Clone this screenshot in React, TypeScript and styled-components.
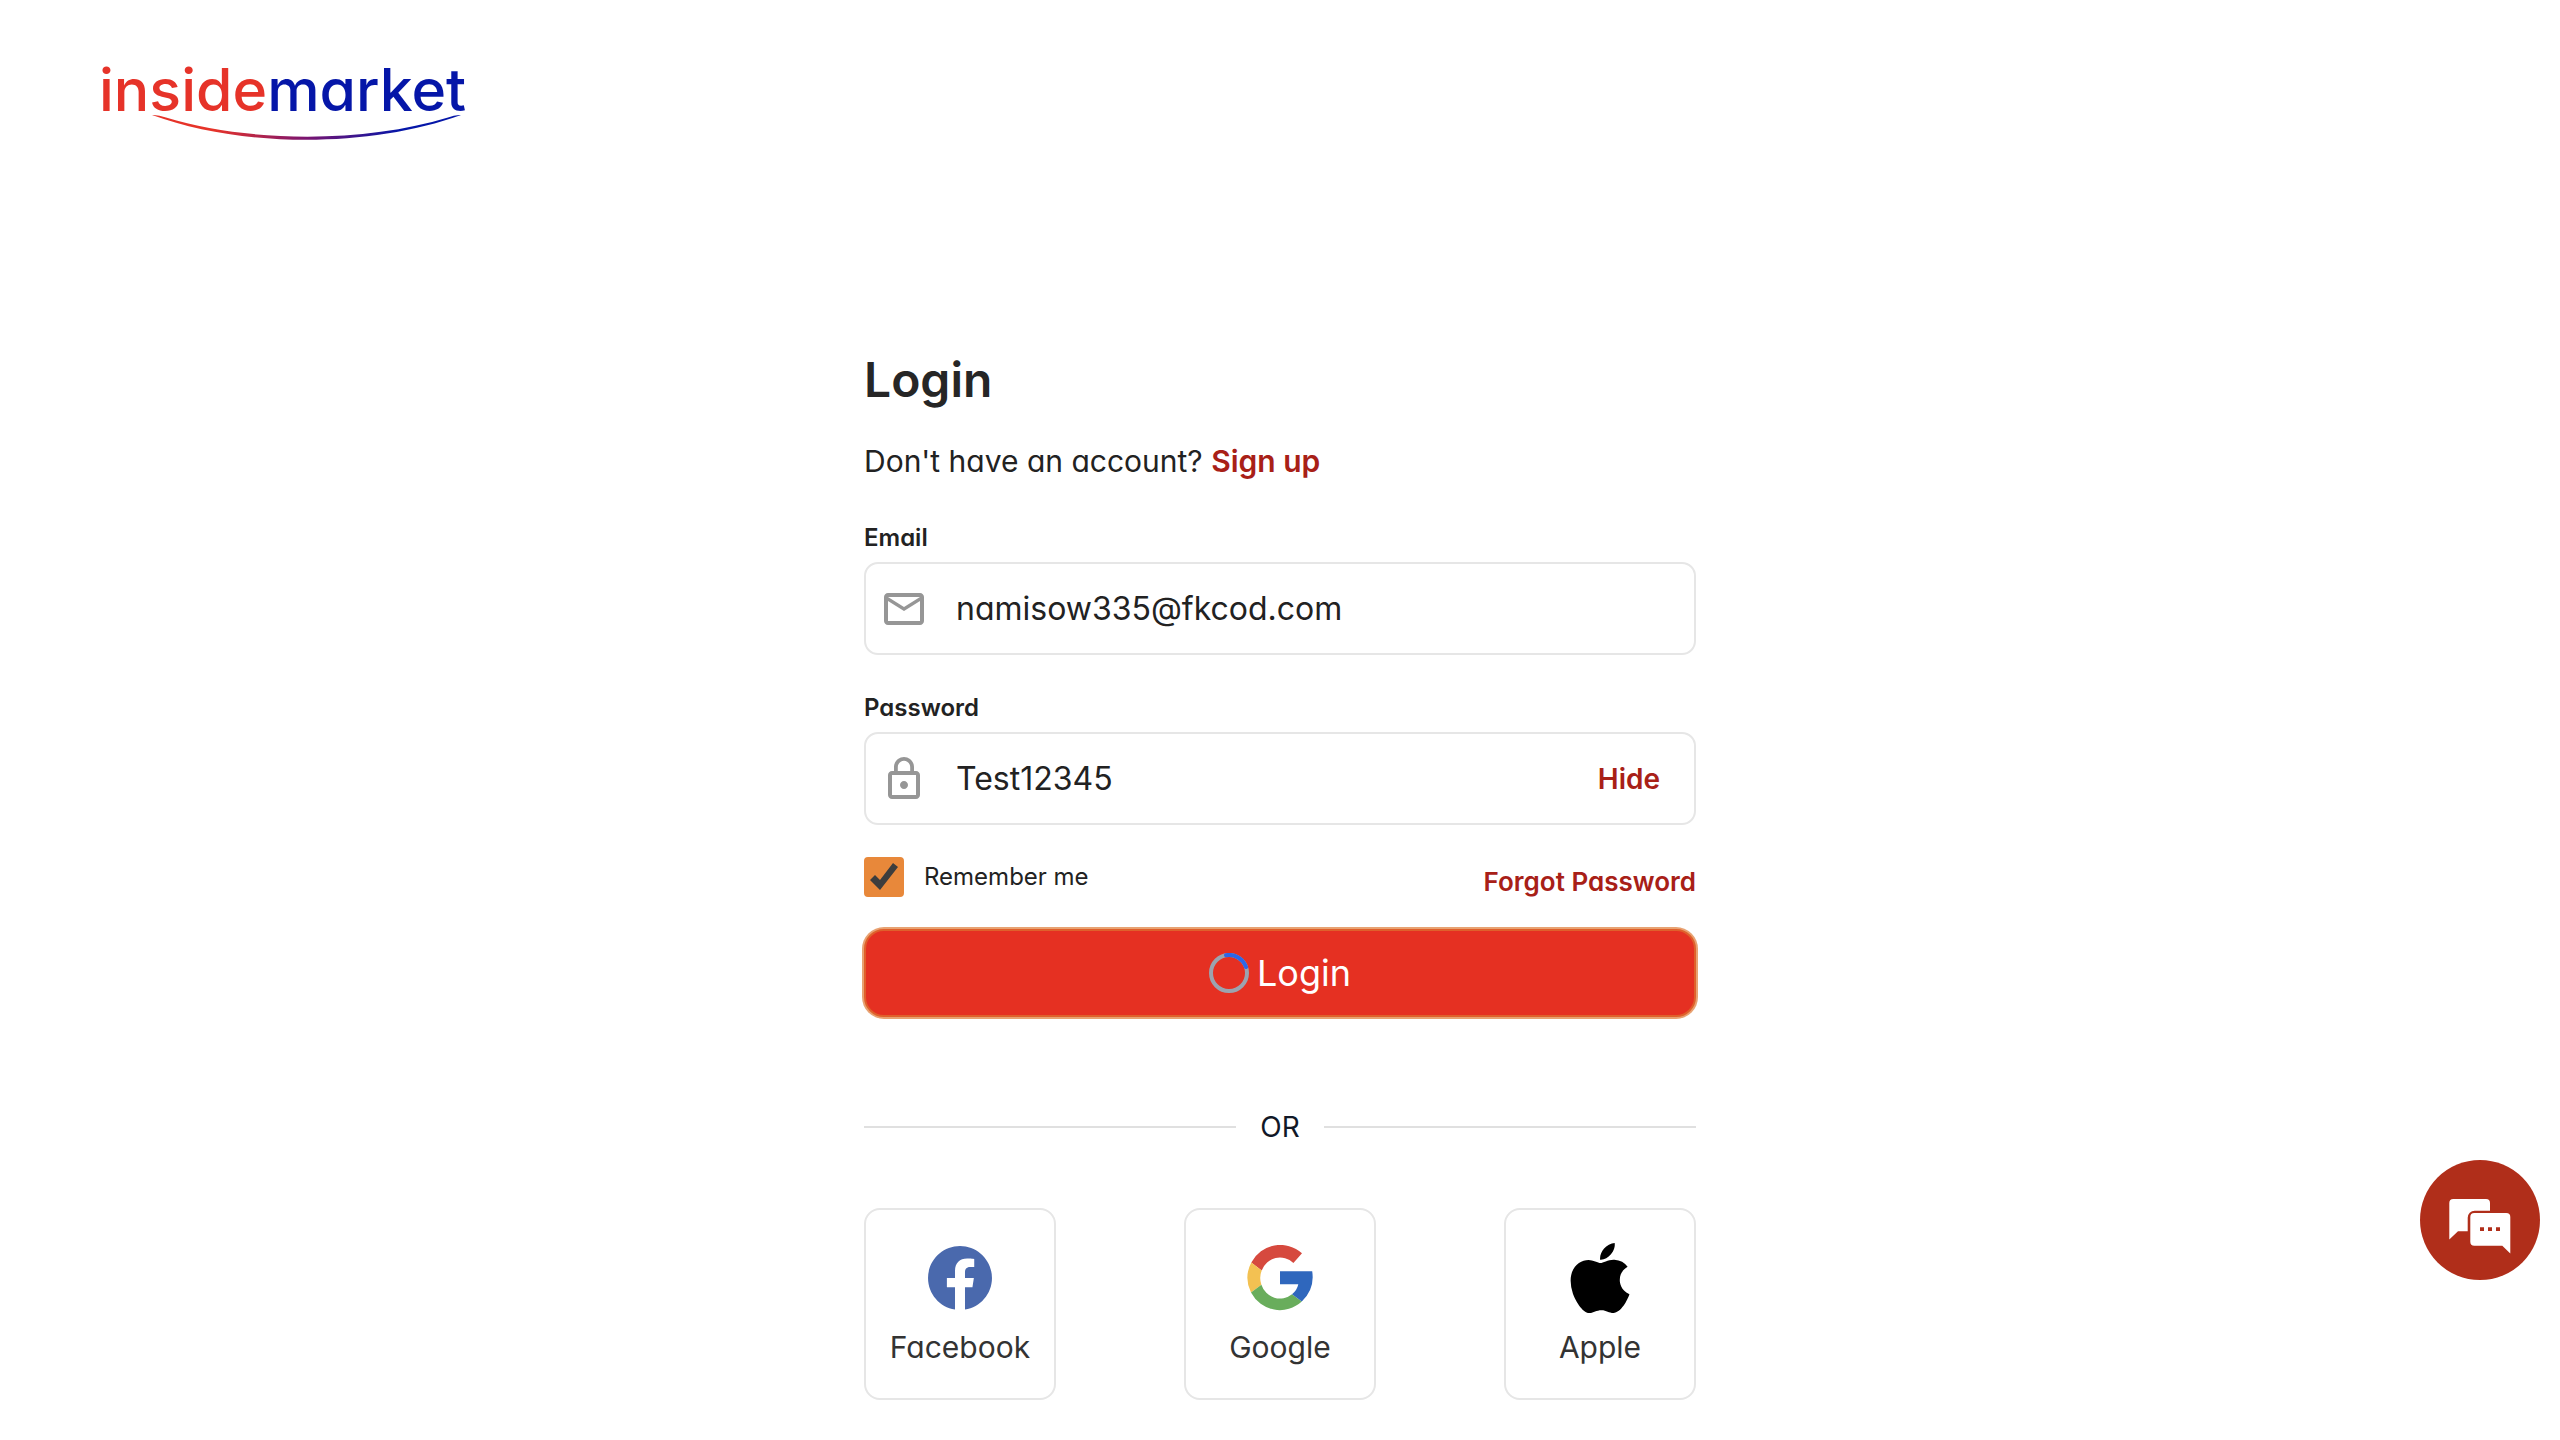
import React, { useState } from "react";
import styled, { createGlobalStyle } from "styled-components";
import { MdOutlineMail, MdLockOutline } from "react-icons/md";
import { FaFacebook, FaApple } from "react-icons/fa";

const GlobalStyle = createGlobalStyle`
  *, *::before, *::after { box-sizing: border-box; }
  body {
    margin: 0;
    background: #fff;
    color: #222;
    font-family: Inter, "Open Sans", sans-serif;
    font-feature-settings: "cv11";
  }
  button, input { font: inherit; font-feature-settings: inherit; color: inherit; }
`;

const Header = styled.header`
  padding: 48px 100px 0;
  height: 144px;
`;

const LogoLink = styled.a`
  display: inline-block;
`;

const LogoSvg = styled.svg`
  display: block;
  overflow: visible;
`;

const Wordmark = styled.text`
  font-size: 59px;
  font-weight: 500;
`;

const Tone = styled.tspan<{ $color: string }>`
  fill: ${(p) => p.$color};
`;

const Main = styled.main`
  width: 100%;
  max-width: 832px;
  margin: 200px auto 0;
  padding-bottom: 40px;
`;

const Title = styled.h1`
  margin: 0 0 24px;
  font-size: 48px;
  line-height: 72px;
  font-weight: 600;
  color: #262626;
`;

const Intro = styled.p`
  margin: 0 0 38px;
  font-size: 30px;
  line-height: 42px;
`;

const TextLink = styled.a`
  color: #a82017;
  font-weight: 600;
  text-decoration: none;
`;

const Field = styled.div<{ $gap: number }>`
  display: flex;
  flex-direction: column;
  gap: 6px;
  margin-bottom: ${(p) => p.$gap}px;
`;

const FieldLabel = styled.label`
  font-size: 24px;
  line-height: 36px;
  font-weight: 600;
`;

const InputBox = styled.div`
  display: flex;
  align-items: center;
  height: 93px;
  padding: 0 34px 0 14px;
  border: 2px solid #e6e6e6;
  border-radius: 14px;
  svg { flex: none; color: #969696; }
`;

const TextInput = styled.input`
  flex: 1;
  min-width: 0;
  padding: 0;
  margin-left: 28px;
  border: 0;
  outline: 0;
  background: none;
  font-size: 32px;
  line-height: 48px;
`;

const HideButton = styled.button`
  padding: 0;
  border: 0;
  background: none;
  color: #a82017;
  font-size: 28px;
  line-height: 42px;
  font-weight: 600;
  cursor: pointer;
`;

const Options = styled.div`
  display: flex;
  justify-content: space-between;
  align-items: flex-start;
  margin-bottom: 27px;
`;

const Remember = styled.label`
  display: flex;
  align-items: center;
  gap: 20px;
  font-size: 24px;
  line-height: 40px;
`;

const Checkbox = styled.input`
  appearance: none;
  width: 40px;
  height: 40px;
  margin: 0;
  border: 2px solid #e8883a;
  border-radius: 4px;
  &:checked { background: #e8883a; }
  &:checked::before {
    content: "";
    display: block;
    width: 36px;
    height: 36px;
    background: #3d3d3d;
    clip-path: polygon(4px 21px, 9px 16px, 14px 21px, 27px 4px, 32px 8px, 14px 31px);
  }
`;

const Forgot = styled(TextLink)`
  padding-top: 5px;
  font-size: 26px;
  line-height: 40px;
`;

const Submit = styled.button`
  display: flex;
  align-items: center;
  justify-content: center;
  gap: 8px;
  width: 100%;
  height: 88px;
  border: 2px solid #df602b;
  border-radius: 20px;
  box-shadow: 0 0 0 2px #e8a272;
  background: #e53022;
  color: #fff;
  font-size: 36px;
  cursor: pointer;
`;

const Divider = styled.div`
  display: flex;
  align-items: center;
  justify-content: center;
  margin: 89px 0 60px;
  color: #111827;
  font-size: 28px;
  line-height: 42px;
`;

const Rule = styled.span`
  flex: 1;
  height: 2px;
  background: #e0e0e0;
`;

const OrText = styled.span`
  width: 88px;
  text-align: center;
`;

const Providers = styled.div`
  display: flex;
  justify-content: space-between;
`;

const Provider = styled.button`
  display: flex;
  flex-direction: column;
  align-items: center;
  gap: 12px;
  width: 192px;
  height: 192px;
  padding: 32px 0 0;
  border: 2px solid #e6e6e6;
  border-radius: 16px;
  background: #fff;
  color: #333;
  font-size: 30px;
  line-height: 42px;
  cursor: pointer;
`;

const ProviderIcon = styled.span`
  display: flex;
  align-items: center;
  justify-content: center;
  height: 72px;
`;

const ChatButton = styled.button`
  position: fixed;
  right: 20px;
  bottom: 160px;
  width: 120px;
  height: 120px;
  padding: 0;
  border: 0;
  border-radius: 50%;
  background: #b02e1a;
  cursor: pointer;
  svg { display: block; }
`;

const Logo = () => (
  <LogoSvg width="364" height="96" viewBox="100 48 364 96" role="img" aria-label="insidemarket">
    <defs>
      <linearGradient id="swoosh" x1="0" x2="1" y1="0" y2="0">
        <stop offset="0.2" stopColor="#e63329" />
        <stop offset="0.5" stopColor="#7a1470" />
        <stop offset="0.8" stopColor="#0516a8" />
      </linearGradient>
    </defs>
    <Wordmark x="99" y="111">
      <Tone $color="#e63329">inside</Tone>
      <Tone $color="#0516a8">market</Tone>
    </Wordmark>
    <path
      d="M152 115Q158 114.500 166 117.500C250 143 365 143 448 117.500Q455 114.500 461 115C370 148 242 148 152 115Z"
      fill="url(#swoosh)"
    />
  </LogoSvg>
);

const Spinner = () => (
  <svg width="40" height="40" viewBox="0 0 40 40" fill="none" aria-hidden="true">
    <circle cx="20" cy="20" r="18" stroke="#9ca3af" strokeWidth="4" />
    <path d="M17 2.2A18 18 0 0 1 37 14" stroke="#2d66e8" strokeWidth="4" strokeLinecap="round" />
  </svg>
);

const GoogleIcon = () => (
  <svg width="66" height="66" viewBox="0 0 66 66" aria-hidden="true">
    <path fill="#d6493e" d="M4.3 17.5A32.7 33 0 0 1 55 8.3L46.4 18A19.5 20 0 0 0 14.7 25.5Z" />
    <path fill="#f3c152" d="M4.3 17.5A32.7 33 0 0 0 4 47.6L14.4 39.8A19.5 20 0 0 1 14.7 25.5Z" />
    <path fill="#69ad5c" d="M4 47.6A32.7 33 0 0 0 54.8 56.6L45 49.2A19.5 20 0 0 1 14.4 39.8Z" />
    <path fill="#2f67bd" d="M33 26.3H65.2Q68 44 54.8 56.6L45 49.2Q50 45.500 51.300 39.300H33Z" />
  </svg>
);

const ChatIcon = () => (
  <svg width="120" height="120" viewBox="0 0 120 120" fill="#fff" aria-hidden="true">
    <path d="M33.300 39H66a4 4 0 0 1 4 4v7.700H54.700a7 7 0 0 0-7 7v13.600H38l-8.700 8.200V43a4 4 0 0 1 4-4Z" />
    <path
      fillRule="evenodd"
      d="M54.300 53h32a4 4 0 0 1 4 4v36.500l-8-7.800h-28a4 4 0 0 1-4-4V57a4 4 0 0 1 4-4ZM60 67.300v3.700h4v-3.700ZM68 67.300v3.700h4v-3.700ZM76 67.300v3.700h4v-3.700Z"
    />
  </svg>
);

export default function App() {
  const [email, setEmail] = useState("namisow335@fkcod.com");
  const [password, setPassword] = useState("Test12345");
  const [visible, setVisible] = useState(true);

  return (
    <>
      <GlobalStyle />
      <Header>
        <LogoLink href="#">
          <Logo />
        </LogoLink>
      </Header>
      <Main>
        <form onSubmit={(e) => e.preventDefault()}>
          <Title>Login</Title>
          <Intro>
            Don't have an account? <TextLink href="#signup">Sign up</TextLink>
          </Intro>
          <Field $gap={35}>
            <FieldLabel htmlFor="email">Email</FieldLabel>
            <InputBox>
              <MdOutlineMail size={48} />
              <TextInput id="email" type="text" value={email} onChange={(e) => setEmail(e.target.value)} />
            </InputBox>
          </Field>
          <Field $gap={32}>
            <FieldLabel htmlFor="password">Password</FieldLabel>
            <InputBox>
              <MdLockOutline size={48} />
              <TextInput
                id="password"
                type={visible ? "text" : "password"}
                value={password}
                onChange={(e) => setPassword(e.target.value)}
              />
              <HideButton type="button" onClick={() => setVisible(!visible)}>
                {visible ? "Hide" : "Show"}
              </HideButton>
            </InputBox>
          </Field>
          <Options>
            <Remember>
              <Checkbox type="checkbox" defaultChecked />
              Remember me
            </Remember>
            <Forgot href="#forgot">Forgot Password</Forgot>
          </Options>
          <Submit type="submit">
            <Spinner />
            Login
          </Submit>
        </form>
        <Divider>
          <Rule />
          <OrText>OR</OrText>
          <Rule />
        </Divider>
        <Providers>
          <Provider type="button">
            <ProviderIcon>
              <FaFacebook size={66} color="#4a69ad" />
            </ProviderIcon>
            Facebook
          </Provider>
          <Provider type="button">
            <ProviderIcon>
              <GoogleIcon />
            </ProviderIcon>
            Google
          </Provider>
          <Provider type="button">
            <ProviderIcon>
              <FaApple size={80} color="#000" />
            </ProviderIcon>
            Apple
          </Provider>
        </Providers>
      </Main>
      <ChatButton type="button" aria-label="Chat">
        <ChatIcon />
      </ChatButton>
    </>
  );
}
